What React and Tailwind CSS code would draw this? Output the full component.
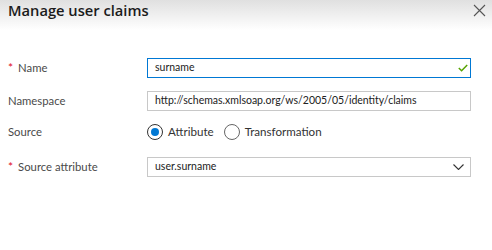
import React from "react";

const font = { fontFamily: 'Lato, "Noto Sans", sans-serif' };

function Label({ required, children }) {
  return (
    <div className="w-[139px] shrink-0 text-[11.3px] text-[#4a4a4a] flex items-center">
      {required && <span className="text-[#e00b1c] mr-[5px] text-[12px]">*</span>}
      <span>{children}</span>
    </div>
  );
}

function Radio({ checked, label }) {
  return (
    <label className="flex items-center mr-[10px]">
      <span
        className={
          "w-[16px] h-[16px] rounded-full border flex items-center justify-center " +
          (checked ? "border-[#333]" : "border-[#666]")
        }
      >
        {checked && <span className="w-[8px] h-[8px] rounded-full bg-[#0078d4]" />}
      </span>
      <span className="ml-[5px] text-[11.6px] text-[#333]">{label}</span>
    </label>
  );
}

export default function App() {
  return (
    <div className="w-[492px] h-[250px] bg-white relative overflow-hidden" style={font}>
      <div className="h-[30px] bg-gradient-to-b from-[#e0e0e0] to-white flex items-start justify-between pl-[8px] pr-[6px]">
        <h1
          className="text-[14.7px] font-semibold text-[#1b1b1b] leading-[20px]"
          style={{ fontFamily: '"Open Sans", "Noto Sans", sans-serif' }}
        >
          Manage user claims
        </h1>
        <svg width="13" height="13" viewBox="0 0 13 13" className="mt-[4px]" fill="none" stroke="#555" strokeWidth="1.1">
          <path d="M1 1 L12 12 M12 1 L1 12" />
        </svg>
      </div>
      <div className="pl-[8px] pt-[28px] flex flex-col">
        <div className="flex h-[20px]">
          <Label required>Name</Label>
          <div className="w-[324px] h-[20px] border border-[#0078d4] flex items-center justify-between pl-[7px] pr-[2px] text-[10.5px] text-[#222]">
            <span>surname</span>
            <svg width="10" height="8" viewBox="0 0 10 8" fill="none" stroke="#57a300" strokeWidth="1.5">
              <path d="M0.8 4 L3.6 6.8 L9.2 1" />
            </svg>
          </div>
        </div>
        <div className="flex h-[20px] mt-[13px]">
          <Label>Namespace</Label>
          <div className="w-[324px] h-[20px] border border-[#c8c8c8] flex items-center px-[7px] text-[10.5px] text-[#222]">
            <span>http://schemas.xmlsoap.org/ws/2005/05/identity/claims</span>
          </div>
        </div>
        <div className="flex h-[16px] mt-[13px]">
          <Label>Source</Label>
          <div className="flex items-center">
            <Radio checked label="Attribute" />
            <Radio label="Transformation" />
          </div>
        </div>
        <div className="flex h-[20px] mt-[17px]">
          <Label required>Source attribute</Label>
          <div className="w-[324px] h-[20px] border border-[#c8c8c8] flex items-center justify-between pl-[7px] pr-[6px] text-[10.5px] text-[#222]">
            <span>user.surname</span>
            <svg width="11" height="6" viewBox="0 0 11 6" fill="none" stroke="#333" strokeWidth="1.1">
              <path d="M0.5 0.5 L5.5 5.5 L10.5 0.5" />
            </svg>
          </div>
        </div>
      </div>
    </div>
  );
}
